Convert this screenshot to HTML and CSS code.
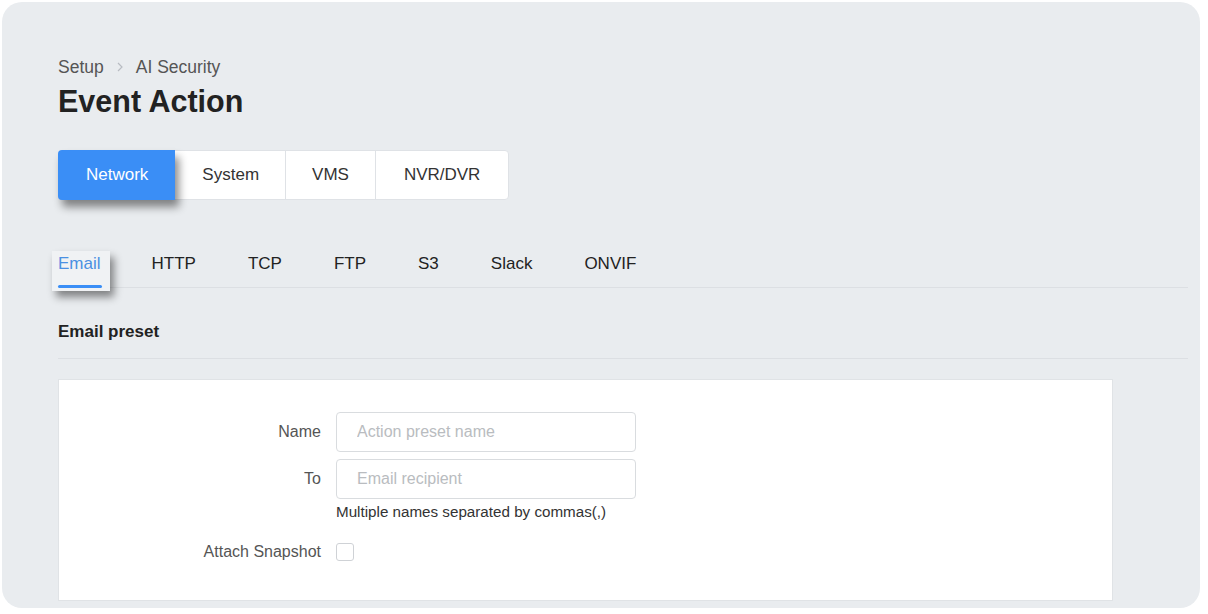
FILE: index.html
```html
<!DOCTYPE html>
<html lang="en">
<head>
  <meta charset="UTF-8" />
  <title>Event Action</title>
  <link rel="stylesheet" href="styles.css">
</head>
<body>

  <div class="panel">
    <!-- Header -->
    <div class="crumbs">
      <span>Setup</span>
      <svg class="chev" width="8" height="12" viewBox="0 0 8 12"><path d="M2 2l4 4-4 4" fill="none" stroke="#b8bcc2" stroke-width="1.2"/></svg>
      <span>AI Security</span>
    </div>
    <h1>Event Action</h1>

    <!-- Category switch -->
    <div class="segments">
      <button class="seg active">Network</button>
      <button class="seg">System</button>
      <button class="seg">VMS</button>
      <button class="seg">NVR/DVR</button>
    </div>

    <!-- Protocol tabs -->
    <div class="tabs">
      <div class="tab active">Email<span class="bar"></span></div>
      <div class="tab">HTTP</div>
      <div class="tab">TCP</div>
      <div class="tab">FTP</div>
      <div class="tab">S3</div>
      <div class="tab">Slack</div>
      <div class="tab">ONVIF</div>
    </div>

    <h2 class="section">Email preset</h2>

    <div class="card">
      <div class="row">
        <label class="lbl">Name</label>
        <input type="text" placeholder="Action preset name" />
      </div>
      <div class="row">
        <label class="lbl">To</label>
        <input type="text" placeholder="Email recipient" />
      </div>
      <div class="row hint-row">
        <span class="lbl"></span>
        <span class="hint">Multiple names separated by commas(,)</span>
      </div>
      <div class="row check-row">
        <label class="lbl">Attach Snapshot</label>
        <span class="check"></span>
      </div>
    </div>
  </div>

</body>
</html>
```

FILE: styles.css
```css
body {
  margin: 0;
  background: #fff;
  font-family: 'Liberation Sans', Arial, sans-serif;
}

.panel {
  margin: 2px;
  width: 1198px;
  height: 606px;
  box-sizing: border-box;
  padding: 55px 12px 0 56px;
  background: #e9ecef;
  border-radius: 20px;
  overflow: hidden;
}

.crumbs {
  display: flex;
  align-items: center;
  gap: 12px;
  font-size: 17.5px;
  line-height: 20px;
  color: #555;
}

h1 {
  margin: 6px 0 0;
  font-size: 30.5px;
  line-height: 36px;
  font-weight: bold;
  color: #222;
}

.segments {
  display: inline-flex;
  margin-top: 31px;
  background: #fff;
  border: 1px solid #dfe2e6;
  border-radius: 4px;
}

.seg {
  height: 48px;
  padding: 0 26px;
  border: none;
  border-left: 1px solid #dfe2e6;
  background: none;
  font-family: inherit;
  font-size: 17px;
  color: #333;
}

.seg:first-child {
  border-left: none;
}

.seg:last-child {
  padding: 0 28px;
}

.seg.active {
  margin: -1px 0 -1px -1px;
  height: 50px;
  padding: 0 27px 0 28px;
  background: #3a8ef6;
  color: #fff;
  border-radius: 4px 0 0 4px;
  box-shadow: 4px 7px 8px rgba(0, 0, 0, 0.45);
  position: relative;
}

.seg.active + .seg {
  border-left: none;
  padding: 0 26px 0 27px;
}

.tabs {
  display: flex;
  align-items: flex-start;
  gap: 40px;
  margin-top: 51px;
  height: 36px;
  border-bottom: 1px solid #dcdfe3;
}

.tab {
  padding: 3px 6px 0;
  font-size: 17px;
  line-height: 20px;
  color: #222;
}

.tab.active {
  height: 40px;
  box-sizing: border-box;
  margin: 0 -4px 0 -6px;
  padding-right: 9px;
  background: #f0f2f4;
  color: #4a90e2;
  box-shadow: 4px 6px 8px rgba(0, 0, 0, 0.45);
  position: relative;
}

.tab .bar {
  display: block;
  margin: 11px -1px 0 0;
  height: 3px;
  background: #3a8ef6;
  border-radius: 2px;
}

.section {
  margin: 0;
  padding: 34px 0 16px;
  font-size: 17px;
  line-height: 20px;
  color: #222;
  border-bottom: 1px solid #dcdfe3;
}

.card {
  margin-top: 20px;
  width: 1055px;
  height: 222px;
  box-sizing: border-box;
  padding-top: 32px;
  background: #fff;
  border: 1px solid #e0e3e6;
}

.row {
  display: flex;
  align-items: center;
  gap: 15px;
  margin-bottom: 7px;
}

.lbl {
  width: 262px;
  text-align: right;
  font-size: 16px;
  color: #555;
}

input {
  width: 300px;
  height: 40px;
  box-sizing: border-box;
  padding: 0 20px;
  border: 1px solid #d9dcdf;
  border-radius: 4px;
  font-family: inherit;
  font-size: 16px;
  color: #333;
}

input::placeholder {
  color: #b9bcc0;
}

.hint-row {
  margin-top: -4px;
  margin-bottom: 0;
}

.hint {
  font-size: 15.2px;
  line-height: 20px;
  color: #333;
}

.check-row {
  margin-top: 21px;
}

.check {
  width: 18px;
  height: 18px;
  box-sizing: border-box;
  border: 1px solid #cfd2d6;
  border-radius: 3px;
}
```
